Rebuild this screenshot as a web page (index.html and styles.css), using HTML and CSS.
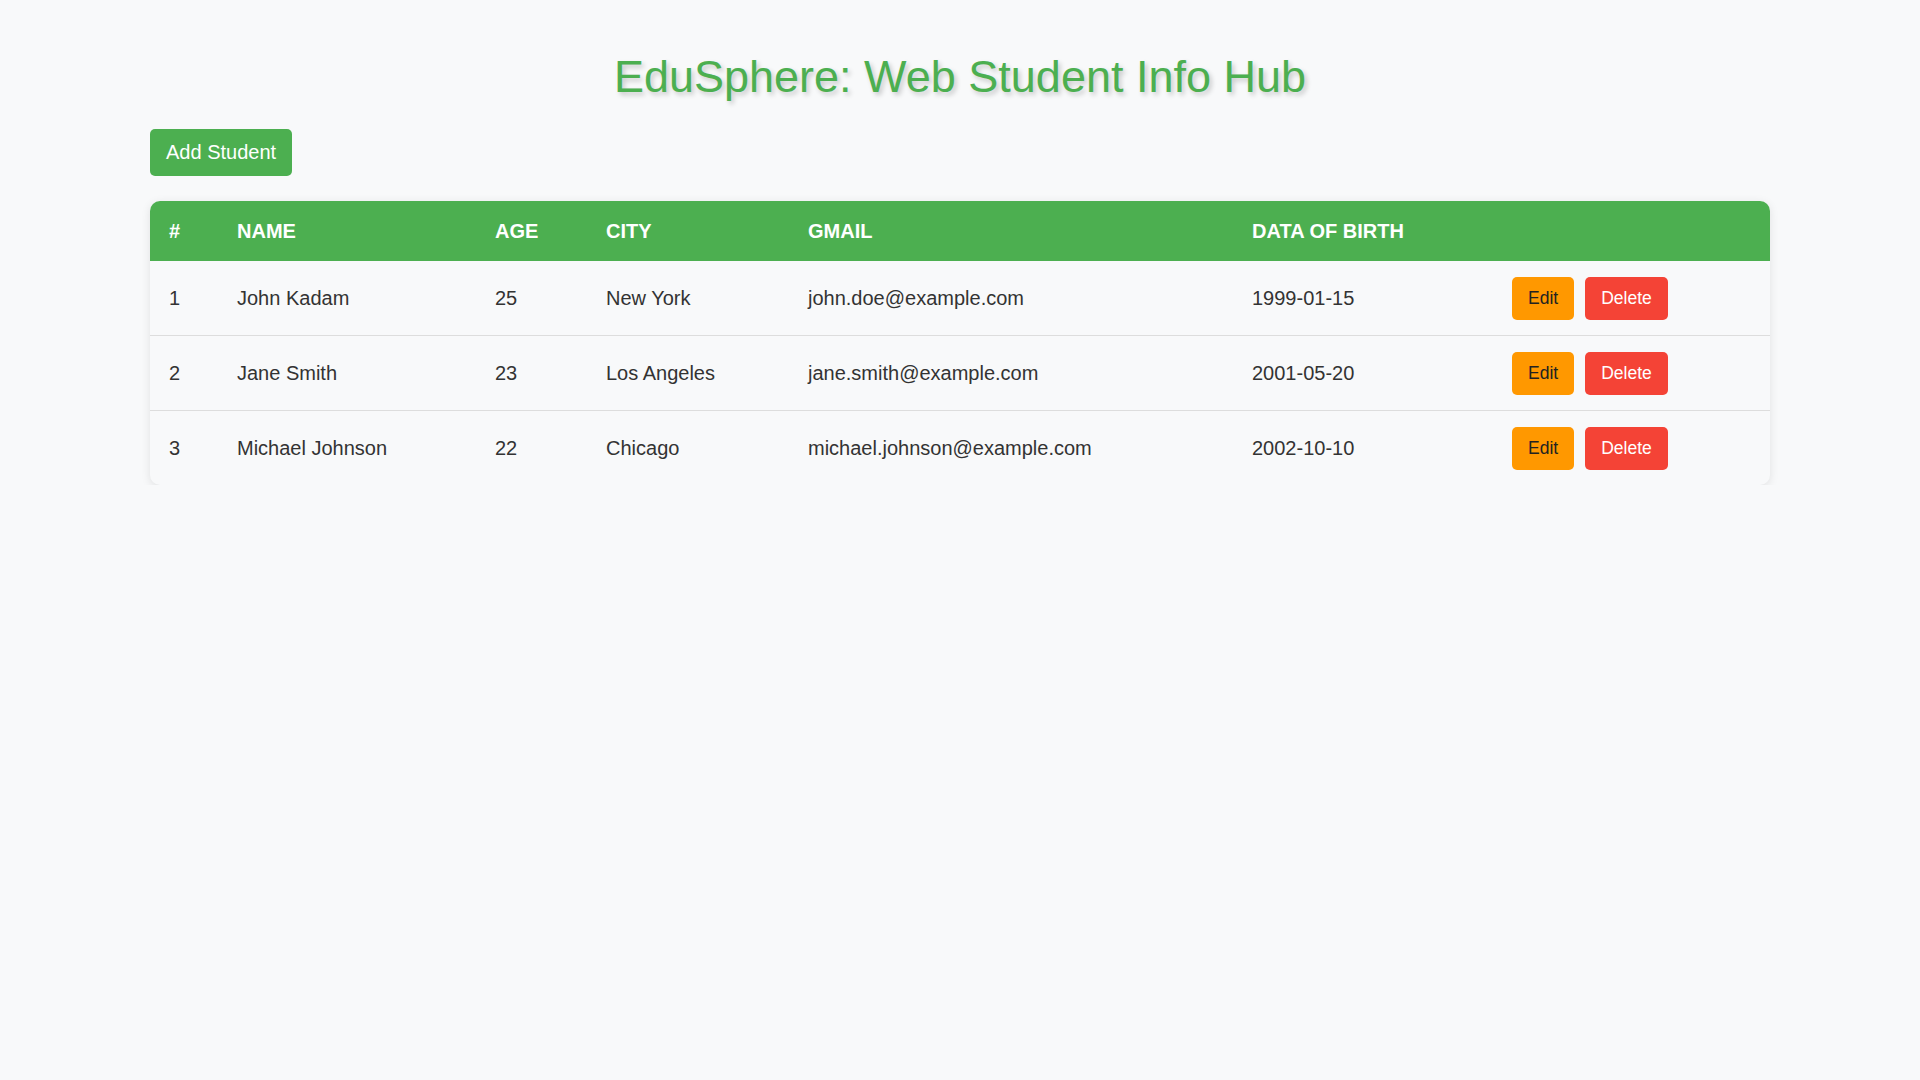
FILE: index.html
```html
<!DOCTYPE html>
<html lang="en">
<head>
<meta charset="UTF-8">
<title>EduSphere: Web Student Info Hub</title>
<link rel="stylesheet" href="styles.css">
</head>
<body>
<div class="container">
  <h1 class="title">EduSphere: Web Student Info Hub</h1>
  <div class="toolbar">
    <button class="btn btn-add">Add Student</button>
  </div>
  <table class="students">
    <colgroup>
      <col class="c-num"><col class="c-name"><col class="c-age"><col class="c-city"><col class="c-mail"><col class="c-dob"><col class="c-act">
    </colgroup>
    <thead>
      <tr>
        <th>#</th><th>Name</th><th>Age</th><th>City</th><th>Gmail</th><th>Data of Birth</th><th></th>
      </tr>
    </thead>
    <tbody>
      <tr>
        <td>1</td><td>John Kadam</td><td>25</td><td>New York</td><td>john.doe@example.com</td><td>1999-01-15</td>
        <td><div class="actions"><button class="btn btn-edit">Edit</button><button class="btn btn-delete">Delete</button></div></td>
      </tr>
      <tr>
        <td>2</td><td>Jane Smith</td><td>23</td><td>Los Angeles</td><td>jane.smith@example.com</td><td>2001-05-20</td>
        <td><div class="actions"><button class="btn btn-edit">Edit</button><button class="btn btn-delete">Delete</button></div></td>
      </tr>
      <tr>
        <td>3</td><td>Michael Johnson</td><td>22</td><td>Chicago</td><td>michael.johnson@example.com</td><td>2002-10-10</td>
        <td><div class="actions"><button class="btn btn-edit">Edit</button><button class="btn btn-delete">Delete</button></div></td>
      </tr>
    </tbody>
  </table>
</div>
</body>
</html>
```
FILE: styles.css
```css
* { box-sizing: border-box; }

html, body {
  margin: 0;
  padding: 0;
  background: #f8f9fa;
}

body {
  font-family: "Liberation Sans", Arial, sans-serif;
  color: #333;
}

.container {
  width: 1620px;
  margin: 0 auto;
  padding-top: 51px;
}

.title {
  margin: 0;
  font-size: 45px;
  line-height: 52px;
  font-weight: normal;
  text-align: center;
  color: #4caf50;
  text-shadow: 2.5px 2.5px 5px rgba(0, 0, 0, 0.2);
}

.toolbar {
  margin-top: 26px;
  margin-bottom: 25px;
  display: flex;
}

.btn {
  font-family: "Liberation Sans", Arial, sans-serif;
  border: none;
  cursor: pointer;
  border-radius: 5px;
}

.btn-add {
  background: #4caf50;
  color: #fff;
  font-size: 20px;
  line-height: 23px;
  padding: 12px 16px;
}

.students {
  width: 1620px;
  table-layout: fixed;
  border-collapse: separate;
  border-spacing: 0;
  border-radius: 10px;
  overflow: hidden;
  background: #f8f9fa;
  box-shadow: 0 2px 10px rgba(0, 0, 0, 0.1);
}

.c-num { width: 68px; }
.c-name { width: 258px; }
.c-age { width: 111px; }
.c-city { width: 202px; }
.c-mail { width: 444px; }
.c-dob { width: 260px; }
.c-act { width: 277px; }

.students th {
  background: #4caf50;
  color: #fff;
  font-size: 20px;
  line-height: 24px;
  font-weight: bold;
  text-transform: uppercase;
  text-align: left;
  padding: 18px 19px;
}

.students td {
  font-size: 20px;
  line-height: 23px;
  padding: 16px 19px 15px;
  text-align: left;
  vertical-align: middle;
  border-bottom: 1px solid #ddd;
  color: #333;
}

.students tbody tr:last-child td {
  border-bottom: none;
}

.actions {
  display: flex;
  gap: 11px;
}

.btn-edit,
.btn-delete {
  font-size: 17.5px;
  line-height: 21px;
  padding: 11px 16px;
}

.btn-edit {
  background: #ff9800;
  color: #222;
}

.btn-delete {
  background: #f44336;
  color: #fff;
}
```
